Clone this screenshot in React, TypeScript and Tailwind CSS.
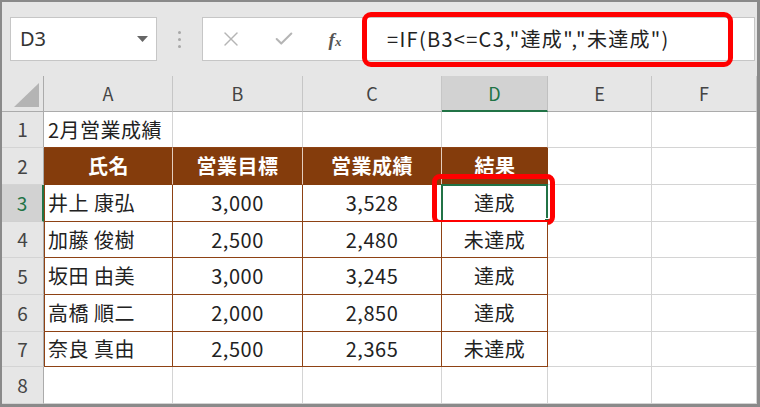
import { X, Check } from 'lucide-react';

const jp = "font-['Noto_Sans_CJK_JP',sans-serif]";

const rowHeights = ['h-[36px]', 'h-[37px]', 'h-[37px]', 'h-[36px]', 'h-[37px]', 'h-[37px]', 'h-[35px]', 'h-[37px]'];

const data: string[][] = [
  ['2月営業成績', '', '', ''],
  ['氏名', '営業目標', '営業成績', '結果'],
  ['井上 康弘', '3,000', '3,528', '達成'],
  ['加藤 俊樹', '2,500', '2,480', '未達成'],
  ['坂田 由美', '3,000', '3,245', '達成'],
  ['高橋 順二', '2,000', '2,850', '達成'],
  ['奈良 真由', '2,500', '2,365', '未達成'],
  ['', '', '', ''],
];

const colWidths = ['w-[129px]', 'w-[130px]', 'w-[139px]', 'w-[106px]', 'w-[104px]', 'w-[105px]'];

function ColHeader({ label, width, selected }: { label: string; width: string; selected?: boolean }) {
  return (
    <div
      className={
        selected
          ? `${width} h-full flex items-center justify-center bg-[#d2d2d2] border-r border-[#c0c0c0] border-b-2 border-b-[#217346] text-[#217346] text-[18px]`
          : `${width} h-full flex items-center justify-center border-r border-[#c6c6c6] border-b border-b-[#ababab] text-[#444] text-[18px]`
      }
    >
      {label}
    </div>
  );
}

function DataRow({ r }: { r: number }) {
  const cells = data[r];
  const inTable = r >= 1 && r <= 6;
  const isHead = r === 1;
  const height = rowHeights[r];

  return (
    <div className={`flex ${height}`}>
      {/* row number */}
      <div
        className={
          r === 2
            ? 'w-[42px] h-full flex items-center justify-center bg-[#d2d2d2] border-r-2 border-[#217346] border-b border-b-[#d0d0d0] text-[#217346] text-[19px]'
            : 'w-[42px] h-full flex items-center justify-center bg-[#e6e6e6] border-r border-[#ababab] border-b border-b-[#d4d4d4] text-[#444] text-[19px]'
        }
      >
        {r + 1}
      </div>

      {[0, 1, 2, 3, 4, 5].map((c) => {
        const text = c < 4 ? cells[c] : '';
        const w = colWidths[c];
        const tableCol = c < 4;

        if (isHead && tableCol) {
          return (
            <div
              key={c}
              className={
                c === 3
                  ? `${w} h-full flex items-center justify-center bg-[#843c0c] border-b border-[#843c0c] text-white font-bold text-[20px] tracking-[0.5px] ${jp}`
                  : c === 0
                  ? `${w} h-full flex items-center justify-center bg-[#843c0c] border-r border-r-[#e4cdbd] border-l border-l-[#843c0c] border-b border-b-[#843c0c] text-white font-bold text-[20px] tracking-[0.5px] ${jp}`
                  : `${w} h-full flex items-center justify-center bg-[#843c0c] border-r border-r-[#e4cdbd] border-b border-b-[#843c0c] text-white font-bold text-[20px] tracking-[0.5px] ${jp}`
              }
            >
              {text}
            </div>
          );
        }

        if (inTable && tableCol) {
          const selected = r === 2 && c === 3;
          return (
            <div
              key={c}
              className={
                c === 0
                  ? `${w} h-full flex items-center pl-[3px] bg-white border-l border-r border-b border-[#8e4214] text-[#222] text-[20px] tracking-[0.5px] whitespace-nowrap ${jp}`
                  : `${w} h-full flex items-center justify-center bg-white border-r border-b border-[#8e4214] text-[#222] text-[20px] tracking-[0.5px] whitespace-nowrap relative ${jp}`
              }
            >
              {selected && (
                <>
                  <div className="absolute -left-px -top-px -right-px -bottom-px border-2 border-[#217346]" />
                  <div className="absolute -right-[4px] -bottom-[4px] w-[7px] h-[7px] bg-[#217346] border border-white" />
                  <div className="absolute -left-[10px] -top-[11px] -right-[8px] -bottom-[4px] border-[5px] border-[#ff0000] rounded-[8px]" />
                </>
              )}
              <span className="relative">{text}</span>
            </div>
          );
        }

        return (
          <div
            key={c}
            className={
              r === 0 && tableCol
                ? `${w} h-full flex items-center pl-1 bg-white border-r border-[#d4d4d4] border-b border-b-[#8e4214] text-[#222] text-[20px] tracking-[0.5px] whitespace-nowrap ${jp}`
                : `${w} h-full flex items-center pl-1 bg-white border-r border-b border-[#d4d4d4] text-[#222] text-[20px] tracking-[0.5px] whitespace-nowrap ${jp}`
            }
          >
            {text}
          </div>
        );
      })}
    </div>
  );
}

export default function App() {
  return (
    <div
      className={`w-[760px] h-[407px] bg-[#e6e6e6] border-t-2 border-l-2 border-r-[3px] border-b-[3px] border-[#8a8a8a] flex flex-col overflow-hidden ${jp}`}
    >
      {/* Formula bar area */}
      <div className="h-[74px] shrink-0 flex items-start pt-[15px] pl-2 pr-[2px]">
        {/* Name box */}
        <div className="w-[147px] h-[44px] bg-white border border-[#c6c6c6] flex items-center justify-between pl-[9px] pr-[8px]">
          <span className="text-[20px] text-[#333] font-['Noto_Sans',sans-serif]">D3</span>
          <svg width="11" height="6" viewBox="0 0 11 6">
            <polygon points="0,0 11,0 5.5,6" fill="#666" />
          </svg>
        </div>

        {/* dots */}
        <div className="w-[45px] h-[44px] flex flex-col items-center justify-center gap-[4px]">
          <div className="w-[3px] h-[3px] rounded-full bg-[#a8a8a8]" />
          <div className="w-[3px] h-[3px] rounded-full bg-[#a8a8a8]" />
          <div className="w-[3px] h-[3px] rounded-full bg-[#a8a8a8]" />
        </div>

        {/* Formula box */}
        <div className="flex-1 h-[44px] bg-white border border-[#c6c6c6] flex items-center relative">
          <div className="w-[56px] flex justify-center">
            <X size={24} strokeWidth={1.4} color="#b5b5b5" />
          </div>
          <div className="w-[50px] flex justify-center">
            <Check size={22} strokeWidth={2.2} color="#b5b5b5" />
          </div>
          <div className="w-[52px] flex justify-center">
            <span className="font-['Liberation_Serif',serif] italic font-bold text-[19px] text-[#555] leading-none">
              f<span className="text-[13px]">x</span>
            </span>
          </div>
          <span className="ml-[26px] text-[20px] text-[#222] tracking-[1.3px] whitespace-nowrap">=IF(B3&lt;=C3,"達成","未達成")</span>
          <div className="absolute left-[159px] -top-[6px] w-[371px] h-[55px] border-[5px] border-[#ff0000] rounded-[9px]" />
        </div>
      </div>

      {/* Sheet */}
      <div className="flex-1 flex flex-col">
        {/* Column headers */}
        <div className="flex h-[36px] shrink-0">
          <div className="w-[42px] h-full flex items-end justify-end pr-[4px] pb-[4px] border-r border-[#ababab] border-b border-b-[#ababab]">
            <svg width="25" height="24" viewBox="0 0 25 24">
              <polygon points="25,0 25,24 0,24" fill="#b4b4b4" />
            </svg>
          </div>
          <ColHeader label="A" width="w-[129px]" />
          <ColHeader label="B" width="w-[130px]" />
          <ColHeader label="C" width="w-[139px]" />
          <ColHeader label="D" width="w-[106px]" selected />
          <ColHeader label="E" width="w-[104px]" />
          <ColHeader label="F" width="w-[105px]" />
        </div>

        {data.map((_, r) => (
          <DataRow key={r} r={r} />
        ))}
      </div>
    </div>
  );
}
